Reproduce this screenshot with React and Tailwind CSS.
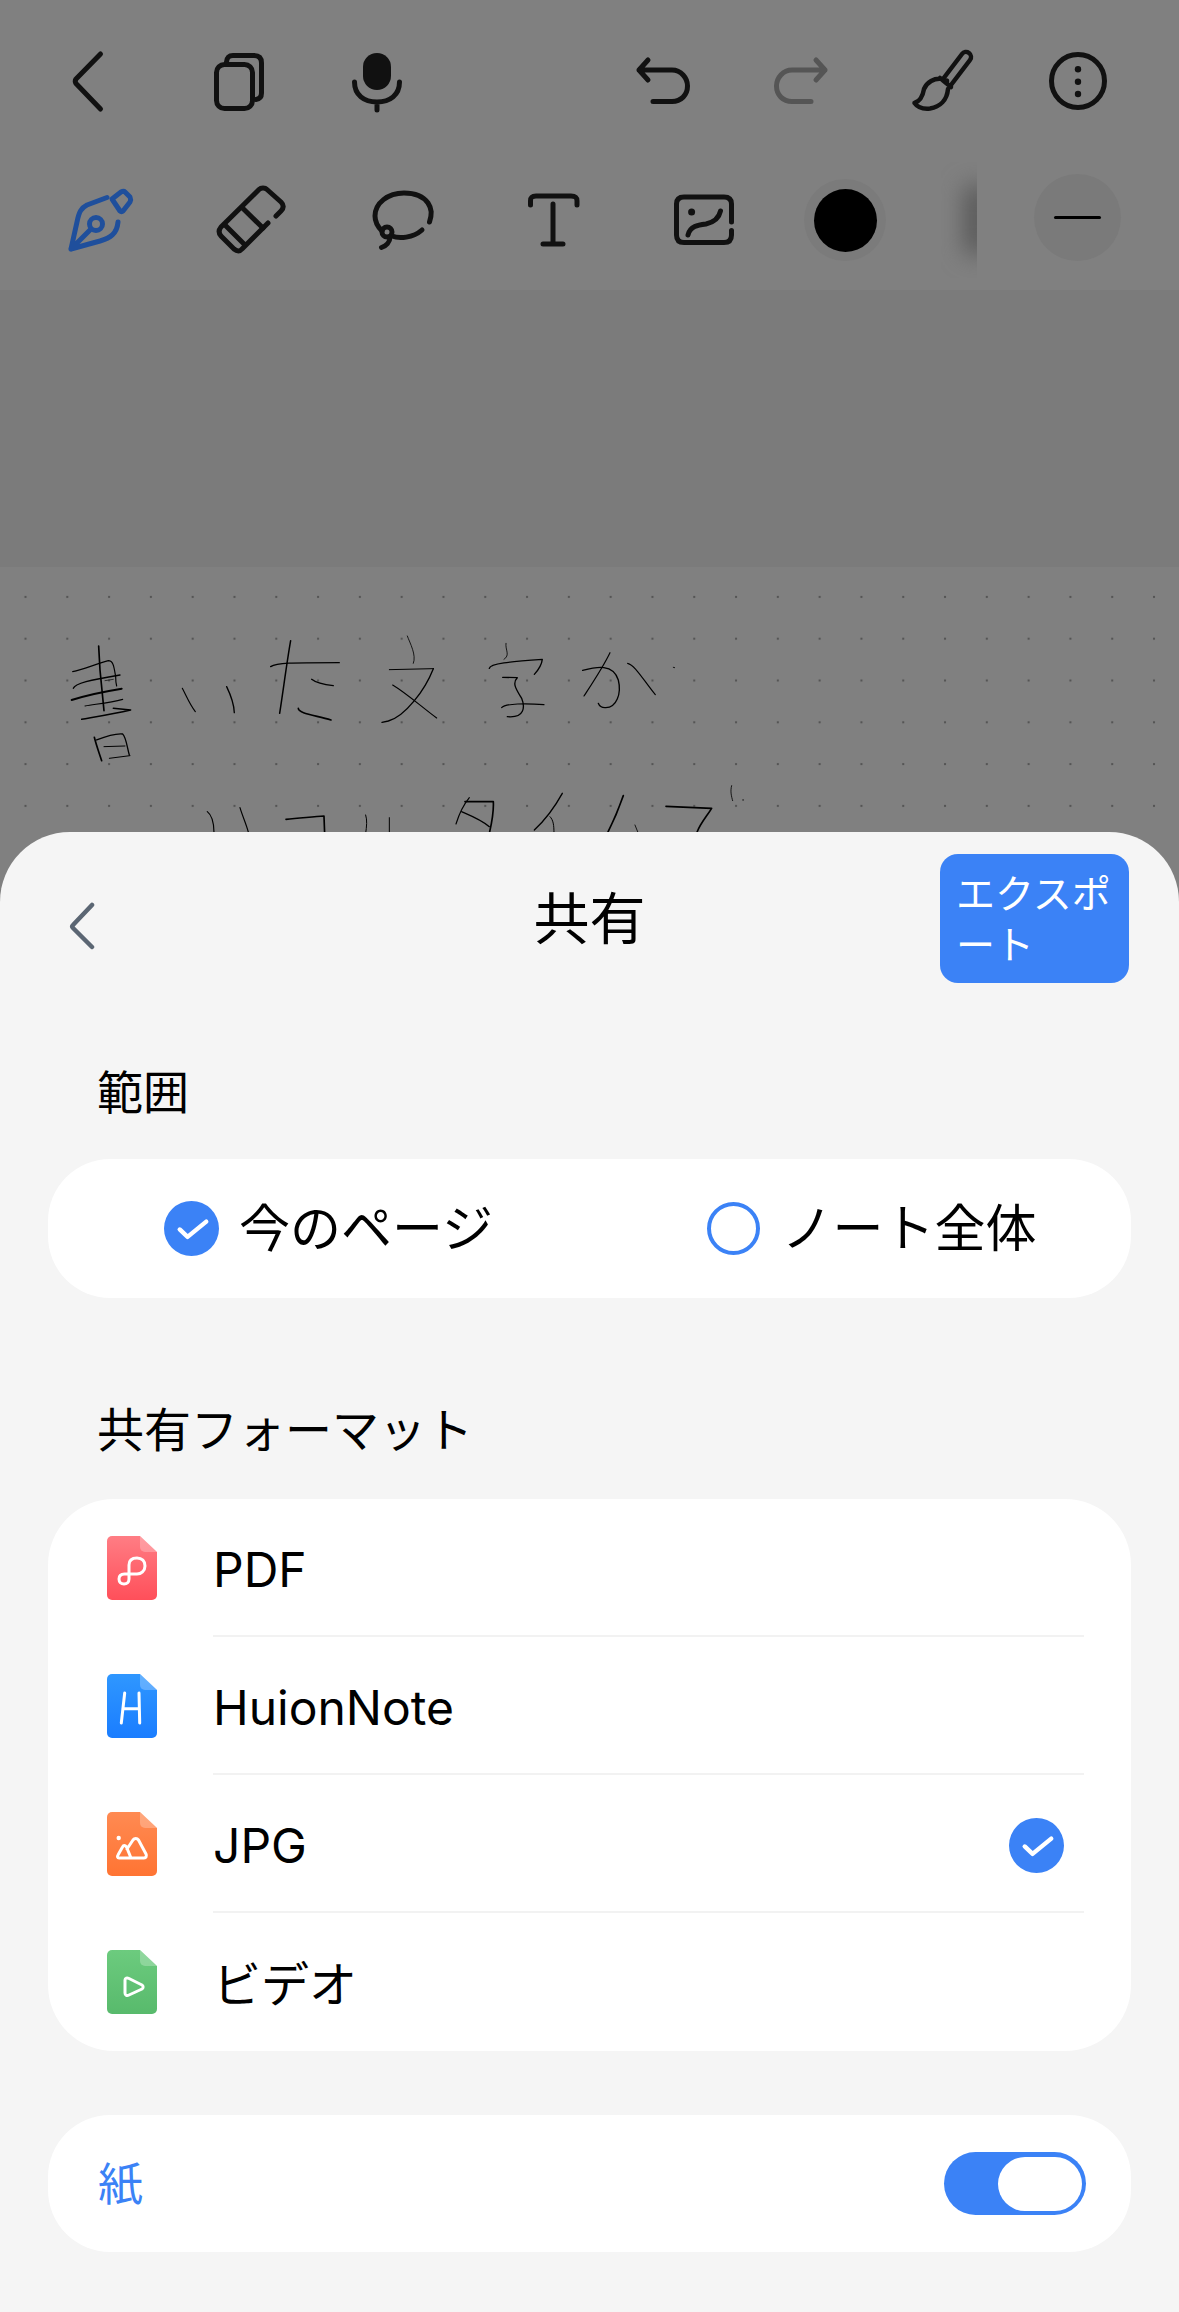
const cjk = "font-['Inter','Noto_Sans_CJK_JP',sans-serif]";

// ink strokes, coordinates as read off the note at 3x
const inkLeft = [
  ['M146 78 L150 150 L162 272', 5],
  ['M68 155 C100 148 130 135 175 122 C190 122 192 140 197 170 C197 185 198 190 200 198', 3.5],
  ['M70 205 C75 190 120 180 210 165', 4],
  ['M65 240 C110 225 160 215 215 206', 6],
  ['M105 258 C140 252 180 248 218 238', 3.5],
  ['M95 298 C140 290 190 282 242 270 L190 265', 4.5],
  ['M165 182 L190 178', 2],
  ['M133 352 C140 380 148 400 155 422', 5],
  ['M140 360 C165 350 195 340 218 342 C228 350 232 385 238 405', 4],
  ['M162 380 L225 378', 3],
  ['M178 415 L240 407', 3],
  ['M397 205 C410 230 420 255 436 275', 3.5],
  ['M530 200 C542 225 552 250 553 278', 4],
  ['M722 62 C710 130 700 210 689 280', 4.5],
  ['M662 140 C680 128 720 128 868 128', 4],
  ['M785 178 C800 190 830 195 850 197', 4],
  ['M745 265 C745 280 790 285 843 300', 5],
  ['M472 575 C485 585 492 605 492 640', 3.5],
  ['M570 563 C578 590 590 615 596 640', 3.5],
  ['M708 598 C750 595 790 590 822 588 L824 640', 5],
];
const inkRight = [
  ['M172 48 C180 70 200 105 190 130', 2.5],
  ['M118 149 L250 146', 3],
  ['M250 146 C225 210 165 290 115 303 L96 307', 4],
  ['M128 195 C170 220 220 265 260 294', 3.5],
  ['M468 70 C465 90 482 105 462 118', 2.5],
  ['M418 145 C420 130 480 125 577 118 C575 135 565 150 553 163', 4],
  ['M458 172 L502 173 C485 190 500 210 515 235 C525 260 525 295 472 290', 4],
  ['M455 263 C465 250 530 250 582 254', 3.5],
  ['M698 151 C740 140 790 130 805 180 C815 220 800 265 765 263 C755 263 748 258 745 250', 4],
  ['M780 98 C760 140 730 185 702 228', 3.5],
  ['M833 130 C855 135 880 180 916 224', 3.5],
  ['M970 142 L974 143', 2.5],
  ['M47 585 C52 600 50 620 47 640', 3],
  ['M118 593 L118 640', 3],
  ['M358 533 C340 555 328 580 318 612', 3.5],
  ['M345 545 L430 545 C432 580 425 610 418 640', 5],
  ['M335 575 C370 590 395 600 418 620', 4],
  ['M637 520 C615 560 585 600 553 630', 4],
  ['M600 590 C610 600 612 615 612 640', 3],
  ['M820 527 C805 570 790 605 772 640', 5],
  ['M855 615 L865 640', 2.5],
  ['M948 559 L1085 565 C1070 590 1050 610 1040 640', 5],
  ['M1145 497 C1140 515 1145 530 1148 542', 2.5],
  ['M1178 540 L1181 540', 2.5],
];

function Ink() {
  const stroke = ([d, w]) => <path key={d} d={d} strokeWidth={w} />;
  return (
    <svg className="absolute inset-0 w-[1179px] h-[265px]" viewBox="0 0 1179 265" fill="none" stroke="#000" strokeLinecap="round" strokeLinejoin="round">
      <g transform="translate(50 53) scale(0.3333)">{inkLeft.map(stroke)}</g>
      <g transform="translate(350 53) scale(0.3333)">{inkRight.map(stroke)}</g>
    </svg>
  );
}

function Top({ children, color = '#111', fill = 'none' }) {
  return (
    <svg className="w-[64px] h-[64px] shrink-0" viewBox="0 0 64 64" fill={fill} stroke={color} strokeWidth="5" strokeLinecap="round" strokeLinejoin="round">
      {children}
    </svg>
  );
}

function Tool({ children, color = '#111' }) {
  return (
    <svg className="w-[72px] h-[72px] shrink-0" viewBox="0 0 72 72" fill="none" stroke={color} strokeWidth="5" strokeLinecap="round" strokeLinejoin="round">
      {children}
    </svg>
  );
}

const undoPath = 'M17 11 L8 21 L17 31 M8 21 H41 C50 21 56.5 29 56.5 37 C56.5 46 50 52.5 41 52.5 H22';

function TopBar() {
  return (
    <div className="h-[162px] flex items-center pl-[55px] pr-[69px]">
      <div className="flex items-center">
        <Top><path d="M45.5 5 L21 30 C20 31.5 20 33 21 34.5 L45.5 60" /></Top>
        <div className="ml-[88px]">
          <Top>
            <rect x="9.5" y="15.5" width="36" height="44" rx="8" />
            <path d="M19.5 13 C20 8 22 6.5 26 6.5 H47 C52 6.5 54.5 9 54.5 14 V44 C54.5 48 53 50 49 50.5" />
          </Top>
        </div>
        <div className="ml-[74px]">
          <Top>
            <rect x="18" y="4" width="28" height="37" rx="14" fill="#111" stroke="none" />
            <path d="M9.5 33 C9.5 46 19 53 32 53 C45 53 54.5 46 54.5 33 M32 53 V61" />
          </Top>
        </div>
      </div>
      <div className="flex items-center ml-auto">
        <Top><path d={undoPath} /></Top>
        <div className="ml-[74px]">
          <Top color="#555"><path d={undoPath} transform="matrix(-1 0 0 1 64 0)" /></Top>
        </div>
        <div className="ml-[77px]">
          <Top>
            <g strokeWidth="4.5">
              <path d="M52 5 A5 5 0 0 1 60 11 L41 36 M33 30 L52 5" />
              <path d="M32 30 C24 29 17 33 14 40 C13 46 11 52 4.5 54 C8 59 15 60 20 59.5 C30 58 37 51 38 40 M30 29 L41 38" />
              <circle cx="36.5" cy="32" r="1.5" strokeWidth="2.5" />
            </g>
          </Top>
        </div>
        <div className="ml-[72px]">
          <Top>
            <circle cx="32" cy="32" r="26.5" />
            <circle cx="32" cy="20.3" r="3.2" fill="#111" stroke="none" />
            <circle cx="32" cy="32.7" r="3.2" fill="#111" stroke="none" />
            <circle cx="32" cy="45" r="3.2" fill="#111" stroke="none" />
          </Top>
        </div>
      </div>
    </div>
  );
}

function ToolBar() {
  return (
    <div className="h-[128px] pb-[12px] flex items-center pl-[64px]">
      <div className="flex items-center gap-[79px]">
        <Tool color="#1f4f9c">
          <path d="M7 65 L13 38 C15 28 17 24 23 21 L43 13.5 M7 65 L36 57 C46 54 53 50 54 38 M7 65 L27 45" />
          <circle cx="32" cy="40" r="6.5" />
          <path d="M48 15 L57 8 C59 7 60 7 61 8 L66 13 C67 15 67 16 66 18 L59 27 C58 28 57 28 56 27 Z" />
        </Tool>
        <Tool>
          <path d="M61 32 L66 27 C69 24 69 21 66 18 L52 5.5 C50 3.5 46 3.5 44 5.5 L6 43 C3.5 46 3.5 49 6 52 L19 65 C22 67.5 25 67.5 27 65 L53 39" />
          <path d="M10 41 L29 60 M27.5 24 L48 44" />
        </Tool>
        <Tool>
          <path d="M63.5 38 C66 30 66 25 62 19 C57 12 48 9 38 9 C22 9 9 19 9 32 C9 38 12 43 16 47 M26 52 C33 55 47 54 56 46" />
          <circle cx="21" cy="48" r="5" />
          <path d="M24 53 C24 58 20 62 15.5 63.5" />
        </Tool>
        <Tool>
          <path d="M13.5 21 V17 C13.5 13 15 12 19 12 H54 C58 12 60 13 60 17 V21 M36 20 V60 M26 60 H46" />
        </Tool>
        <Tool>
          <path d="M63.5 38 V20 C63.5 15 61 13 56 13 H16 C11 13 8.5 15 8.5 20 V51 C8.5 56 11 58.5 16 58.5 H56 C61 58.5 63.5 56 63.5 51 V46.5" />
          <circle cx="23.6" cy="28" r="3.5" fill="#111" stroke="none" />
          <path d="M20 51 C22 42 30 41 38 40 C47 38 51 34 52.5 27" />
        </Tool>
      </div>
      <div className="ml-[64px] w-[82px] h-[82px] rounded-full bg-[#7b7b7b] flex items-center justify-center">
        <div className="w-[63px] h-[63px] rounded-full bg-black" />
      </div>
      <div className="ml-[55px] w-[36px] h-[116px] overflow-hidden relative">
        <div className="absolute right-[-14px] top-[24px] w-[26px] h-[68px] bg-[#555] blur-[12px]" />
      </div>
      <div className="ml-[57px] mb-[6px] w-[87px] h-[87px] rounded-full bg-[#7a7a7a] flex items-center justify-center">
        <div className="w-[47px] h-[3px] bg-black rounded-full" />
      </div>
    </div>
  );
}

function FileIcon({ id, from, to, children }) {
  return (
    <svg className="w-[50px] h-[64px]" viewBox="0 0 50 64" fill="none">
      <defs>
        <linearGradient id={id} x1="0" y1="0" x2="0" y2="1">
          <stop offset="0" stopColor={from} />
          <stop offset="1" stopColor={to} />
        </linearGradient>
      </defs>
      <path d="M5 0 H33 L50 16 V59 A5 5 0 0 1 45 64 H5 A5 5 0 0 1 0 59 V5 A5 5 0 0 1 5 0 Z" fill={`url(#${id})`} />
      <path d="M33 0 L50 16 H38 A5 5 0 0 1 33 11 Z" fill="#fff" fillOpacity="0.25" />
      <g stroke="#fff" strokeWidth="3" strokeLinecap="round" strokeLinejoin="round">{children}</g>
    </svg>
  );
}

function CheckDot() {
  return (
    <svg className="w-[55px] h-[55px] shrink-0" viewBox="0 0 56 56">
      <circle cx="28" cy="28" r="28" fill="#3b82f6" />
      <path d="M16 29 L24 36.5 L43 21" fill="none" stroke="#fff" strokeWidth="4.5" strokeLinecap="round" strokeLinejoin="round" />
    </svg>
  );
}

const formats = [
  {
    name: 'PDF',
    icon: (
      <FileIcon id="file-pdf" from="#ff7d84" to="#ff4f5a">
        <path d="M22 43 V29 C22 24 25 22 30 22 C35 22 38 25 38 30 C38 35 34 38 30 38 H17.5 C14 38 12 40 12 43 C12 46 14 48 17 48 C20 48 22 46 22 43 Z" />
      </FileIcon>
    ),
  },
  {
    name: 'HuionNote',
    icon: (
      <FileIcon id="file-huion" from="#2f97ff" to="#1a7dff">
        <path d="M17.7 19 L14.3 49 M32 19 L32.7 49 M15.8 34.7 H32.3" />
      </FileIcon>
    ),
  },
  {
    name: 'JPG',
    selected: true,
    icon: (
      <FileIcon id="file-jpg" from="#ff8a52" to="#ff7433">
        <circle cx="11.7" cy="26" r="2.2" fill="#fff" stroke="none" />
        <path d="M20 37 L26 28 C27.5 26 30 26 31.5 28 L39 42 C40 44 39 46 37 46 H12 C10.5 46 10 44.5 11 43 L15.5 35 C16.5 33 18 33 19.5 35 L24 46" />
      </FileIcon>
    ),
  },
  {
    name: 'ビデオ',
    last: true,
    icon: (
      <FileIcon id="file-video" from="#6ccb7e" to="#58ba6c">
        <path d="M18 30 C18 28 20 27.5 22 28.5 L35 35 C36.5 36 36.5 38 35 39 L22 45 C20 46 18 45.5 18 43 Z" />
      </FileIcon>
    ),
  },
];

function ShareSheet() {
  return (
    <div className={`flex-1 bg-[#f5f5f5] rounded-t-[70px] text-black ${cjk}`}>
      <div className="grid grid-cols-[1fr_auto_1fr] items-center pt-[22px]">
        <div className="pl-[68px] pt-[14px]">
          <svg className="w-[28px] h-[48px]" viewBox="0 0 28 48" fill="none" stroke="#5b6673" strokeWidth="4.5" strokeLinecap="round" strokeLinejoin="round">
            <path d="M24 3 L5 23 C4 24 4 25 5 26 L24 45" />
          </svg>
        </div>
        <h1 className="text-[56px] leading-[64px] font-normal">共有</h1>
        <div className="flex justify-end pr-[50px]">
          <button className="w-[189px] h-[129px] bg-[#3b82f6] text-white rounded-[18px] pl-[16px] pr-[10px] text-[39px] leading-[51px] text-left [line-break:anywhere]">
            エクスポート
          </button>
        </div>
      </div>

      <h2 className="mt-[79px] pl-[97px] text-[46px] leading-[60px]">範囲</h2>
      <div className="mt-[37px] mx-[48px] h-[139px] rounded-[62px] bg-white grid grid-cols-2 items-center text-[51px]">
        <div className="flex items-center gap-[20px] pl-[116px]">
          <CheckDot />
          <span className="pt-[2px]">今のページ</span>
        </div>
        <div className="flex items-center gap-[22px] pl-[117px]">
          <div className="w-[53px] h-[53px] rounded-full border-[4px] border-[#3b82f6]" />
          <span className="pt-[2px]">ノート全体</span>
        </div>
      </div>

      <h2 className="mt-[102px] pl-[97px] text-[47px] leading-[60px]">共有フォーマット</h2>
      <div className="mt-[39px] mx-[48px] rounded-[66px] bg-white text-[48px]">
        {formats.map((f) => (
          <div key={f.name} className="flex h-[138px]">
            <div className="w-[165px] pl-[59px] flex items-center">{f.icon}</div>
            <div className={`flex-1 mr-[47px] pt-[5px] pr-[20px] flex items-center justify-between ${f.last ? '' : 'border-b-2 border-[#f2f2f2]'}`}>
              <span className="pt-[1px]">{f.name}</span>
              {f.selected && <CheckDot />}
            </div>
          </div>
        ))}
      </div>

      <div className="mt-[64px] mx-[48px] h-[137px] rounded-[62px] bg-white flex items-center justify-between pl-[50px] pr-[45px]">
        <span className="pt-[2px] text-[45px] text-[#3b82f6]">紙</span>
        <div className="w-[142px] h-[63px] rounded-full bg-[#3b82f6] flex items-center justify-end pr-[4px]">
          <div className="w-[84px] h-[54px] rounded-full bg-white" />
        </div>
      </div>
    </div>
  );
}

export default function App() {
  return (
    <div className="w-[1179px] h-[2312px] bg-[#808080] flex flex-col overflow-hidden">
      <TopBar />
      <ToolBar />
      <div className="h-[277px] bg-[#7b7b7b]" />
      <div className="relative h-[265px] overflow-hidden bg-[radial-gradient(circle,#555_1px,transparent_1.6px)] bg-[length:41.8px_41.8px] bg-[position:4.6px_9px]">
        <Ink />
      </div>
      <ShareSheet />
    </div>
  );
}
